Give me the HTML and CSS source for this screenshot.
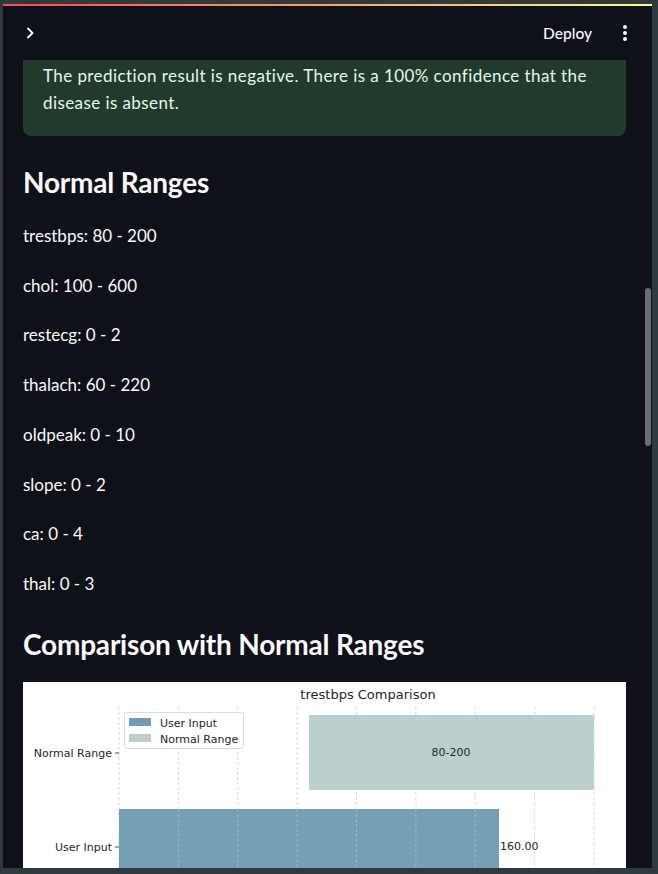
FILE: index.html
```html
<!DOCTYPE html>
<html lang="en">
<head>
<meta charset="utf-8">
<title>Heart Disease Prediction</title>
<link rel="stylesheet" href="styles.css">
</head>
<body>
<div class="frame">
  <div class="app">
    <header class="header">
      <div class="decoration"></div>
      <div class="toolbar">
        <button class="icon-btn chevron" aria-label="Expand sidebar">
          <svg width="10" height="12" viewBox="0 0 10 12"><path d="M3 1.5 L7.5 6 L3 10.5" fill="none" stroke="#fafafa" stroke-width="1.8" stroke-linecap="round" stroke-linejoin="round"/></svg>
        </button>
        <div class="toolbar-right">
          <span class="deploy">Deploy</span>
          <button class="icon-btn kebab" aria-label="Main menu">
            <svg width="6" height="18" viewBox="0 0 6 18"><circle cx="3" cy="3" r="2" fill="#fafafa"/><circle cx="3" cy="9" r="2" fill="#fafafa"/><circle cx="3" cy="15" r="2" fill="#fafafa"/></svg>
          </button>
        </div>
      </div>
    </header>
    <main class="main">
      <div class="alert-success">
        <p>The prediction result is negative. There is a 100% confidence that the disease is absent.</p>
      </div>
      <h3 class="section-title first">Normal Ranges</h3>
      <div class="ranges">
        <p>trestbps: 80 - 200</p>
        <p>chol: 100 - 600</p>
        <p>restecg: 0 - 2</p>
        <p>thalach: 60 - 220</p>
        <p>oldpeak: 0 - 10</p>
        <p>slope: 0 - 2</p>
        <p>ca: 0 - 4</p>
        <p>thal: 0 - 3</p>
      </div>
      <h3 class="section-title second">Comparison with Normal Ranges</h3>
      <div class="chart">
        <svg width="603" height="300" viewBox="0 0 603 300" font-family="DejaVu Sans, sans-serif">
          <rect x="0" y="0" width="603" height="300" fill="#ffffff"/>
          <text x="345" y="17" font-size="13" text-anchor="middle" fill="#262626">trestbps Comparison</text>
          <g stroke="#d4d4d4" stroke-width="0.9" stroke-dasharray="3,2">
            <line x1="96" y1="25" x2="96" y2="300"/>
            <line x1="155.4" y1="25" x2="155.4" y2="300"/>
            <line x1="214.8" y1="25" x2="214.8" y2="300"/>
            <line x1="274.1" y1="25" x2="274.1" y2="300"/>
            <line x1="333.5" y1="25" x2="333.5" y2="300"/>
            <line x1="392.9" y1="25" x2="392.9" y2="300"/>
            <line x1="452.3" y1="25" x2="452.3" y2="300"/>
            <line x1="511.6" y1="25" x2="511.6" y2="300"/>
            <line x1="571" y1="25" x2="571" y2="300"/>
          </g>
          <rect x="286" y="33" width="285" height="75" fill="#bccfcf"/>
          <rect x="96" y="127" width="380" height="173" fill="#729bb5" fill-opacity="0.97"/>
          <g stroke="#d8dede" stroke-width="0.8" stroke-dasharray="3,2" opacity="0.5">
            <line x1="155.4" y1="127" x2="155.4" y2="300"/>
            <line x1="214.8" y1="127" x2="214.8" y2="300"/>
            <line x1="274.1" y1="127" x2="274.1" y2="300"/>
            <line x1="333.5" y1="127" x2="333.5" y2="300"/>
            <line x1="392.9" y1="127" x2="392.9" y2="300"/>
            <line x1="452.3" y1="127" x2="452.3" y2="300"/>
          </g>
          <g stroke="#333" stroke-width="0.9">
            <line x1="92" y1="71" x2="96" y2="71"/>
            <line x1="92" y1="165" x2="96" y2="165"/>
          </g>
          <g font-size="11" fill="#262626">
            <text x="89" y="75" text-anchor="end">Normal Range</text>
            <text x="89" y="169" text-anchor="end">User Input</text>
            <text x="428" y="74" text-anchor="middle">80-200</text>
            <text x="477" y="168">160.00</text>
          </g>
          <rect x="101.5" y="30.5" width="119" height="36" rx="2" fill="#ffffff" fill-opacity="0.85" stroke="#dddddd"/>
          <rect x="106" y="36" width="22" height="8" fill="#729bb5"/>
          <rect x="106" y="52" width="22" height="8" fill="#bccfcf"/>
          <g font-size="11" fill="#262626">
            <text x="137" y="44.5">User Input</text>
            <text x="137" y="61">Normal Range</text>
          </g>
        </svg>
      </div>
    </main>
    <div class="scroll-thumb"></div>
  </div>
</div>
</body>
</html>
```

FILE: styles.css
```css
* { box-sizing: border-box; }

html, body {
  margin: 0;
  padding: 0;
  background: #2e3a3d;
  overflow: hidden;
}

.frame {
  width: 658px;
  height: 874px;
  padding: 4px 6px 6px 3px;
}

.app {
  position: relative;
  width: 649px;
  height: 864px;
  background: #0e1117;
  color: #fafafa;
  font-family: "Lato", "Open Sans", sans-serif;
  display: flex;
  flex-direction: column;
  overflow: hidden;
}

.header {
  height: 56px;
  flex: none;
  display: flex;
  flex-direction: column;
  background: #0e1117;
  position: relative;
  z-index: 2;
}

.decoration {
  height: 2px;
  background: linear-gradient(90deg, #ff4b4b, #fffd80);
}

.toolbar {
  flex: 1;
  display: flex;
  align-items: center;
  justify-content: space-between;
  padding: 0 24px 0 22px;
}

.icon-btn {
  background: none;
  border: none;
  padding: 0;
  display: flex;
  align-items: center;
  justify-content: center;
  cursor: pointer;
}

.chevron { width: 10px; height: 12px; }

.toolbar-right {
  display: flex;
  align-items: center;
  gap: 30px;
}

.deploy {
  font-size: 15.5px;
  font-weight: 500;
  color: #fafafa;
}

.kebab { width: 6px; height: 18px; }

.main {
  flex: 1;
  overflow: hidden;
  padding: 0 26px 0 20px;
}

.alert-success {
  margin-top: -14px;
  padding: 16px 20px 20px 20px;
  background: #223a2c;
  border-radius: 8px;
  color: #e4f8ea;
}

.alert-success p {
  margin: 0;
  font-size: 17px;
  line-height: 27px;
  letter-spacing: 0.42px;
}

.section-title {
  margin: 0;
  font-size: 28px;
  font-weight: 700;
  line-height: 33.6px;
  letter-spacing: -0.2px;
}

.section-title.first { margin-top: 30px; }
.section-title.second { margin-top: 31.4px; }

.ranges {
  display: flex;
  flex-direction: column;
  gap: 24px;
  margin-top: 23.4px;
}

.ranges p {
  margin: 0;
  font-size: 17px;
  line-height: 25.7px;
}

.chart {
  margin-top: 20.2px;
  width: 603px;
  line-height: 0;
}

.scroll-thumb {
  position: absolute;
  right: 1px;
  top: 284px;
  width: 6px;
  height: 158px;
  border-radius: 3px;
  background: #6b6d72;
}
```
